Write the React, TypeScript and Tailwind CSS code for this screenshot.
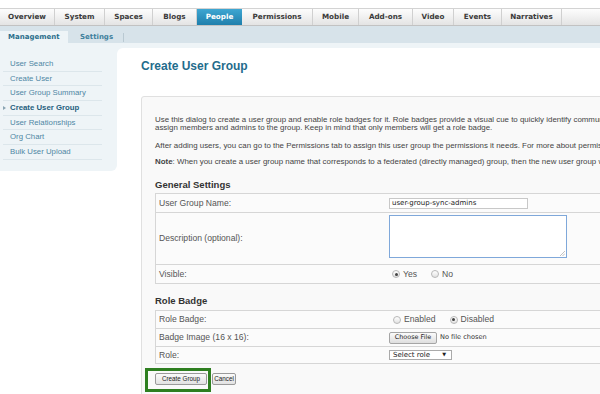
import React from "react";

const ARIAL = "font-['Liberation_Sans',Arial,sans-serif]";
const VERD = "font-['DejaVu_Sans',Verdana,sans-serif]";

const tabs = [
  { label: "Overview", w: "w-[55px]" },
  { label: "System", w: "w-[50px]" },
  { label: "Spaces", w: "w-[48px]" },
  { label: "Blogs", w: "w-[44px]" },
  { label: "People", w: "w-[45px]", active: true },
  { label: "Permissions", w: "w-[71px]" },
  { label: "Mobile", w: "w-[46px]" },
  { label: "Add-ons", w: "w-[54px]" },
  { label: "Video", w: "w-[41px]" },
  { label: "Events", w: "w-[48px]" },
  { label: "Narratives", w: "w-[60px]" },
];

const sideItems = [
  "User Search",
  "Create User",
  "User Group Summary",
  "Create User Group",
  "User Relationships",
  "Org Chart",
  "Bulk User Upload",
];

function Radio({ checked }: { checked?: boolean }) {
  return (
    <span className="w-[8px] h-[8px] rounded-full border border-[#b8b8b8] bg-gradient-to-b from-[#ffffff] to-[#e2e2e2] flex items-center justify-center shrink-0">
      {checked && <span className="w-[3px] h-[3px] rounded-full bg-[#444]" />}
    </span>
  );
}

function Row({ label, h, children }: { label: string; h: string; children?: React.ReactNode }) {
  return (
    <div className={`flex ${h} border-b border-[#d6d6d6]`}>
      <div className={`w-[233px] shrink-0 pl-[3px] flex items-center text-[8.6px] text-[#555] ${ARIAL}`}>{label}</div>
      <div className="flex-1 flex items-center">{children}</div>
    </div>
  );
}

export default function App() {
  return (
    <div className="w-[600px] h-[394px] overflow-hidden bg-white relative">
      <div className="h-[8px] bg-white" />
      {/* Tab bar */}
      <div className="flex h-[18px] border-t border-[#d3d3d3] border-b border-b-[#c2c2c2] bg-gradient-to-b from-[#fdfdfd] to-[#e4e4e4]">
        {tabs.map((t) =>
          t.active ? (
            <div
              key={t.label}
              className={`${t.w} shrink-0 flex items-center justify-center bg-gradient-to-b from-[#3ea6d2] to-[#1e7fac] text-white text-[7.2px] font-bold ${VERD}`}
            >
              {t.label}
            </div>
          ) : (
            <div
              key={t.label}
              className={`${t.w} shrink-0 flex items-center justify-center border-r border-[#d0d0d0] text-[#3a3a3a] text-[7.2px] font-bold ${VERD}`}
            >
              {t.label}
            </div>
          )
        )}
      </div>
      {/* Sub tab bar */}
      <div className="h-[17px] bg-[#d7e3ea] flex items-end">
        <div className={`w-[68px] h-[12px] bg-[#eef4f7] flex items-center pl-[8px] text-[7px] font-bold text-[#2b6e8b] ${VERD}`}>
          Management
        </div>
        <div className="h-[12px] flex items-center">
          <span className={`pl-[12px] pr-[10px] text-[7px] font-bold text-[#3e7f9c] ${VERD}`}>Settings</span>
          <span className="w-px h-[9px] bg-[#b9c9d2]" />
        </div>
      </div>
      {/* Body */}
      <div className="flex h-[351px]">
        <div className="w-[117px] shrink-0 self-start bg-[#eef4f7] rounded-br-[6px] pt-[14px] pb-[11px]">
          {sideItems.map((s) => {
            const active = s === "Create User Group";
            return (
              <div
                key={s}
                className={`relative ml-[3px] w-[99px] h-[14.67px] border-b border-[#dce6eb] pl-[7px] flex items-center text-[7.8px] whitespace-nowrap ${ARIAL} ${
                  active ? "font-bold text-[#1f5f7e]" : "text-[#4f87a4]"
                }`}
              >
                {active && (
                  <span className="absolute left-[0px] top-[5px] w-0 h-0 border-t-[2.5px] border-b-[2.5px] border-l-[3px] border-t-transparent border-b-transparent border-l-[#8aa4b2]" />
                )}
                {s}
              </div>
            );
          })}
        </div>
        <div className="flex-1 min-w-0 overflow-hidden bg-[#eef4f7] pt-[5px]">
          <div className="bg-white rounded-tl-[6px] h-full pl-[24px] pt-[11px]">
            <div className={`text-[12px] leading-[14px] font-bold text-[#1f6c8c] ${ARIAL}`}>Create User Group</div>
            <div className="mt-[23px] w-[600px] h-[400px] border border-[#e0e0e0] bg-[#f9f9f9] rounded-tl-[3px] pl-[13px] pt-[19px]">
              <div className={`text-[7.9px] leading-[8.3px] text-[#444] whitespace-nowrap ${ARIAL}`}>
                <p>
                  Use this dialog to create a user group and enable role badges for it. Role badges provide a visual cue to quickly identify community members who have special roles. After you create the group, you can
                  <br />
                  assign members and admins to the group. Keep in mind that only members will get a role badge.
                </p>
                <p className="mt-[9.4px]">
                  After adding users, you can go to the Permissions tab to assign this user group the permissions it needs. For more about permissions, see the documentation.
                </p>
                <p className="mt-[7.7px]">
                  <b>Note</b>: When you create a user group name that corresponds to a federated (directly managed) group, then the new user group will be synchronized.
                </p>
              </div>
              <div className={`mt-[12.3px] text-[9.5px] leading-[11px] font-bold text-[#333] ${ARIAL}`}>General Settings</div>
              <div className="mt-[3.5px] w-[600px] border-t border-[#d6d6d6] border-l bg-[#fbfbfb]">
                <Row label="User Group Name:" h="h-[19px]">
                  <div className={`w-[139px] h-[11px] border border-[#c8c8c8] bg-white pl-[2px] flex items-center text-[7px] text-[#222] ${VERD}`}>
                    user-group-sync-admins
                  </div>
                </Row>
                <div className="flex h-[52px] border-b border-[#d6d6d6]">
                  <div className={`w-[233px] shrink-0 pl-[3px] flex items-center text-[8.6px] text-[#555] ${ARIAL}`}>Description (optional):</div>
                  <div className="flex-1 pt-[2px]">
                    <div className="relative w-[178px] h-[43px] border border-[#7fa8da] bg-white">
                      <svg className="absolute right-[1px] bottom-[1px]" width="5" height="5" viewBox="0 0 5 5">
                        <line x1="0" y1="5" x2="5" y2="0" stroke="#999" strokeWidth="0.6" />
                        <line x1="2.5" y1="5" x2="5" y2="2.5" stroke="#999" strokeWidth="0.6" />
                      </svg>
                    </div>
                  </div>
                </div>
                <Row label="Visible:" h="h-[19px]">
                  <div className={`flex items-center pl-[3px] text-[8.6px] text-[#555] ${ARIAL}`}>
                    <Radio checked />
                    <span className="ml-[3px]">Yes</span>
                    <span className="ml-[14px]"><Radio /></span>
                    <span className="ml-[3px]">No</span>
                  </div>
                </Row>
              </div>
              <div className={`mt-[10.5px] text-[9.5px] leading-[11px] font-bold text-[#333] ${ARIAL}`}>Role Badge</div>
              <div className="mt-[4.5px] w-[600px] border-t border-[#d6d6d6] border-l bg-[#fbfbfb]">
                <Row label="Role Badge:" h="h-[18px]">
                  <div className={`flex items-center pl-[4px] text-[8.6px] text-[#555] ${ARIAL}`}>
                    <Radio />
                    <span className="ml-[3px]">Enabled</span>
                    <span className="ml-[14px]"><Radio checked /></span>
                    <span className="ml-[3px]">Disabled</span>
                  </div>
                </Row>
                <Row label="Badge Image (16 x 16):" h="h-[18px]">
                  <div className={`w-[48px] h-[12px] border border-[#a5a5a5] rounded-[2px] bg-gradient-to-b from-[#fbfbfb] to-[#dedede] flex items-center justify-center text-[6.4px] text-[#222] ${VERD}`}>
                    Choose File
                  </div>
                  <span className={`ml-[3px] text-[6.6px] text-[#333] ${VERD}`}>No file chosen</span>
                </Row>
                <Row label="Role:" h="h-[17px]">
                  <div className={`w-[63px] h-[10px] border border-[#aaa] bg-white flex items-center justify-between pl-[3px] pr-[5px] text-[7px] text-[#222] ${VERD}`}>
                    <span>Select role</span>
                    <span className="text-[5px]">▼</span>
                  </div>
                </Row>
              </div>
              <div className="relative mt-[9px] flex gap-[5px]">
                <div className={`w-[52px] h-[12px] border border-[#9a9a9a] rounded-[2px] bg-gradient-to-b from-[#fbfbfb] to-[#e2e2e2] flex items-center justify-center text-[6.3px] text-[#222] ${ARIAL}`}>
                  Create Group
                </div>
                <div className={`w-[24px] h-[12px] border border-[#9a9a9a] rounded-[2px] bg-gradient-to-b from-[#fbfbfb] to-[#e2e2e2] flex items-center justify-center text-[6.3px] text-[#222] ${ARIAL}`}>
                  Cancel
                </div>
                <div className="absolute left-[-10px] top-[-5px] w-[66px] h-[24px] border-[3px] border-[#2e7f20]" />
              </div>
            </div>
          </div>
        </div>
      </div>
    </div>
  );
}
